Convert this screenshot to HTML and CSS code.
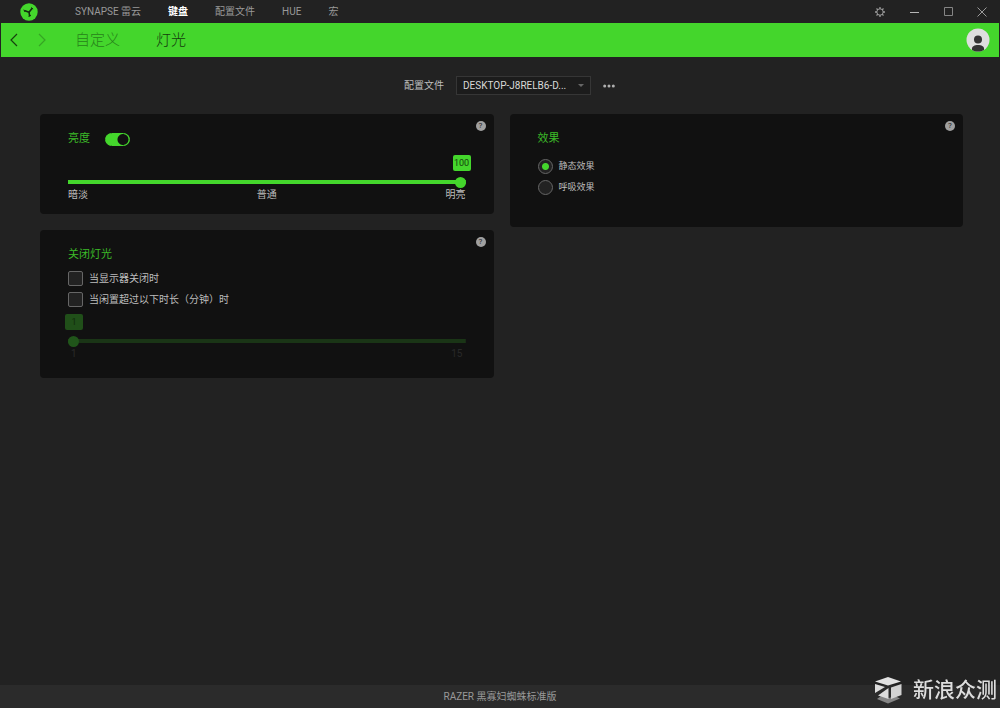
FILE: index.html
```html
<!DOCTYPE html>
<html lang="zh-CN">
<head>
<meta charset="utf-8">
<title>Razer Synapse</title>
<link rel="stylesheet" href="styles.css">
</head>
<body>
<div class="app">
  <header class="titlebar">
    <svg class="logo" viewBox="0 0 18 18" aria-hidden="true">
      <circle cx="9" cy="9" r="8.7" fill="#44d62c"/>
      <g fill="none" stroke="#142a10" stroke-linecap="round">
        <path d="M9 9.200 5 7.800M9 9.200l2.800-3.400M9 9.200l.6 3.400" stroke-width="1.600"/>
        <path d="M4 7l.8 1.600M11.400 4.800l1.400 1M8.800 13.200l1.800-.6" stroke-width="1"/>
      </g>
    </svg>
    <nav class="tabs">
      <a class="tab" href="#synapse">SYNAPSE 雷云</a>
      <a class="tab tab-active" href="#keyboard">键盘</a>
      <a class="tab" href="#profiles">配置文件</a>
      <a class="tab" href="#hue">HUE</a>
      <a class="tab" href="#macro">宏</a>
    </nav>
    <div class="window-buttons">
      <button class="icon-button" aria-label="设置"><svg width="12" height="12" viewBox="0 0 12 12" fill="none" stroke="#9a9a9a"><circle cx="6" cy="6" r="3.2"/><path d="M6 1v2M6 9v2M1 6h2M9 6h2M2.5 2.5l1.400 1.400M8.1 8.1l1.400 1.400M2.5 9.5l1.400-1.400M8.1 3.9l1.400-1.400" stroke-width="1.3"/></svg></button>
      <button class="icon-button" aria-label="最小化"><svg width="12" height="12" viewBox="0 0 12 12" fill="none" stroke="#b5b5b5"><path d="M2 6.5h9"/></svg></button>
      <button class="icon-button" aria-label="最大化"><svg width="12" height="12" viewBox="0 0 12 12" fill="none" stroke="#858585"><path d="M2.5 1.5h8v8h-8z"/></svg></button>
      <button class="icon-button" aria-label="关闭"><svg width="12" height="12" viewBox="0 0 12 12" fill="none" stroke="#9a9a9a"><path d="M1.500 1.500l9 9M10.500 1.500l-9 9"/></svg></button>
    </div>
  </header>

  <div class="subbar">
    <div class="history">
      <button class="icon-button" aria-label="后退"><svg width="8" height="14" viewBox="0 0 8 14" fill="none" stroke="#17400f" stroke-width="1.2"><path d="M7 1 1 7l6 6"/></svg></button>
      <button class="icon-button" aria-label="前进" disabled><svg width="8" height="14" viewBox="0 0 8 14" fill="none" stroke="#36a524" stroke-width="1.2"><path d="M1 1l6 6-6 6"/></svg></button>
    </div>
    <nav class="pages">
      <a class="page" href="#customize">自定义</a>
      <a class="page page-active" href="#lighting">灯光</a>
    </nav>
    <button class="icon-button avatar" aria-label="账户"><svg width="24" height="24" viewBox="0 0 24 24"><defs><clipPath id="face"><circle cx="12" cy="12" r="11.5"/></clipPath></defs><circle cx="12" cy="12" r="11.5" fill="#dedede"/><g clip-path="url(#face)" fill="#333"><circle cx="12" cy="11.5" r="4"/><path d="M6 24v-3.500c0-2.200 2.500-3.500 6-3.500s6 1.300 6 3.500V24z"/></g></svg></button>
  </div>

  <main class="content">
    <div class="profile">
      <label for="profile">配置文件</label>
      <span class="select-wrap">
        <select id="profile" class="select"><option>DESKTOP-J8RELB6-D...</option></select>
      </span>
      <button class="icon-button" aria-label="更多"><svg width="12" height="4" viewBox="0 0 12 4" fill="#b0b0b0"><circle cx="1.700" cy="2" r="1.500"/><circle cx="6" cy="2" r="1.500"/><circle cx="10.300" cy="2" r="1.500"/></svg></button>
    </div>

    <div class="columns">
      <div class="column">
        <section class="card">
          <button class="help" aria-label="亮度帮助">?</button>
          <div class="card-head">
            <label class="card-title" for="power">亮度</label>
            <input id="power" class="toggle" type="checkbox" checked>
          </div>
          <output class="value value-end" for="brightness">100</output>
          <input id="brightness" class="slider" type="range" min="0" max="100" value="100" aria-label="亮度">
          <div class="scale"><span>暗淡</span><span>普通</span><span>明亮</span></div>
        </section>

        <section class="card card-off">
          <button class="help" aria-label="关闭灯光帮助">?</button>
          <h2 class="card-title">关闭灯光</h2>
          <div class="options">
            <label class="option"><input class="box" type="checkbox">当显示器关闭时</label>
            <label class="option"><input class="box" type="checkbox">当闲置超过以下时长（分钟）时</label>
          </div>
          <output class="value value-start" for="idle">1</output>
          <input id="idle" class="slider" type="range" min="1" max="15" value="1" aria-label="闲置时长" disabled>
          <div class="scale scale-off"><span>1</span><span>15</span></div>
        </section>
      </div>

      <div class="column">
        <section class="card card-effects">
          <button class="help" aria-label="效果帮助">?</button>
          <h2 class="card-title">效果</h2>
          <div class="options options-small">
            <label class="option"><input class="box radio" type="radio" name="effect" checked>静态效果</label>
            <label class="option"><input class="box radio" type="radio" name="effect">呼吸效果</label>
          </div>
        </section>
      </div>
    </div>
  </main>

  <footer class="footer">RAZER 黑寡妇蜘蛛标准版</footer>

  <div class="watermark">
    <svg width="28" height="28" viewBox="0 0 28 28" aria-hidden="true">
      <path d="M14 27.500 3 23l4-3 8 2 6-2 5 2.500z" fill="#858585"/>
      <path d="M14 1 27 5.500 14 9.500 1 5.500z" fill="#e2e2e2"/>
      <path d="M1 8l10 3L1 17zM14.500 12v11L4 19.500z" fill="#dcdcdc"/>
      <path d="M27.500 8v11L17 23V11.500z" fill="#d2d2d2"/>
    </svg>
    <span>新浪众测</span>
  </div>
</div>
</body>
</html>
```
FILE: styles.css
```css
* { box-sizing: border-box; }

body {
  margin: 0;
  background: #222;
  color: #bdbdbd;
  font: 10px/12px Roboto, "Noto Sans CJK SC", sans-serif;
}

button, input, select { margin: 0; padding: 0; font: inherit; color: inherit; }
a { color: inherit; text-decoration: none; }

.app { min-height: 100vh; display: flex; flex-direction: column; }

.icon-button { display: flex; background: none; border: 0; }

.titlebar {
  display: flex;
  align-items: center;
  height: 23px;
  padding: 0 12px 0 20px;
}
.logo { width: 18px; height: 18px; margin-right: 37px; }
.tabs { display: flex; gap: 27px; color: #999; }
.tab-active { color: #fff; font-weight: 700; }
.window-buttons { display: flex; gap: 22px; margin-left: auto; }

.subbar {
  display: flex;
  align-items: center;
  height: 34px;
  margin: 0 1px;
  padding: 0 9px;
  background: #44d62c;
}
.history { display: flex; gap: 20px; }
.pages {
  display: flex;
  gap: 36px;
  margin-left: 29px;
  font-size: 15px;
  line-height: 20px;
  font-weight: 300;
  color: #27831a;
}
.page-active { color: #143a0d; }
.avatar { margin-left: auto; }

.content { flex: 1; padding: 19px 37px 19px 40px; }

.profile {
  display: flex;
  align-items: center;
  justify-content: center;
  gap: 12px;
  margin: 0 0 19px 16px;
}
.select-wrap { position: relative; display: flex; }
.select-wrap::after {
  content: "";
  position: absolute;
  right: 7px;
  top: 8px;
  border: 3px solid transparent;
  border-top-color: #666;
  border-bottom: 0;
  pointer-events: none;
}
.select {
  appearance: none;
  width: 135px;
  height: 19px;
  padding: 0 6px;
  background: #1c1c1c;
  border: 1px solid #363636;
  color: #d8d8d8;
}

.columns { display: flex; align-items: flex-start; gap: 16px; }
.column { flex: 1; display: flex; flex-direction: column; gap: 16px; }

.card {
  position: relative;
  display: flex;
  flex-direction: column;
  padding: 16px 28px 13px;
  background: #111;
  border-radius: 4px;
}
.card-off { padding-bottom: 18px; }
.card-effects { padding-bottom: 32px; }
.card-head { display: flex; align-items: center; gap: 15px; }
.card-title {
  margin: 0;
  font-size: 11px;
  line-height: 18px;
  font-weight: 400;
  color: #3cba28;
}

.help {
  position: absolute;
  top: 7px;
  right: 8px;
  width: 10px;
  height: 10px;
  border: 0;
  border-radius: 50%;
  background: #a0a0a0;
  color: #222;
  font-size: 8px;
  line-height: 10px;
}

.toggle {
  appearance: none;
  width: 25px;
  height: 13px;
  border: 1px solid #44d62c;
  border-radius: 7px;
  background: radial-gradient(circle at 17px 50%, #111 5px, #44d62c 6px);
}

.value {
  width: 18px;
  border-radius: 2px;
  background: #44d62c;
  color: #14400c;
  font-size: 9px;
  line-height: 16px;
  text-align: center;
}
.value-end { align-self: flex-end; margin: 7px -5px 5px 0; }
.value-start {
  margin: 7px 0 5px -3px;
  background: #204f19;
  color: #112b0d;
}

.slider {
  appearance: none;
  width: 100%;
  height: 12px;
  background: linear-gradient(#44d62c, #44d62c) center / 100% 4px no-repeat;
  border-radius: 2px;
}
.slider::-webkit-slider-thumb {
  appearance: none;
  width: 11px;
  height: 11px;
  border-radius: 50%;
  background: #44d62c;
}
.slider:disabled { background-image: linear-gradient(#1a3516, #1a3516); }
.slider:disabled::-webkit-slider-thumb { background: #20551a; }

.scale { display: flex; justify-content: space-between; margin-top: 1px; }
.scale-off { padding: 0 3px; color: #292929; }

.options { display: flex; flex-direction: column; gap: 6px; margin-top: 7px; }
.options-small { margin-top: 11px; font-size: 9px; }
.option { display: flex; align-items: center; gap: 6px; line-height: 15px; }
.box {
  appearance: none;
  width: 15px;
  height: 15px;
  border: 1px solid #666;
  border-radius: 2px;
  background: #222;
}
.radio { border-radius: 50%; }
.radio:checked { background: radial-gradient(circle, #44d62c 3px, #222 4px); }

.footer {
  height: 23px;
  background: #2b2b2b;
  color: #999;
  line-height: 23px;
  text-align: center;
}

.watermark {
  position: fixed;
  right: 3px;
  bottom: 4px;
  display: flex;
  align-items: center;
  gap: 11px;
  color: #ddd;
  font-size: 21px;
  line-height: 28px;
  font-weight: 500;
  pointer-events: none;
}
```
